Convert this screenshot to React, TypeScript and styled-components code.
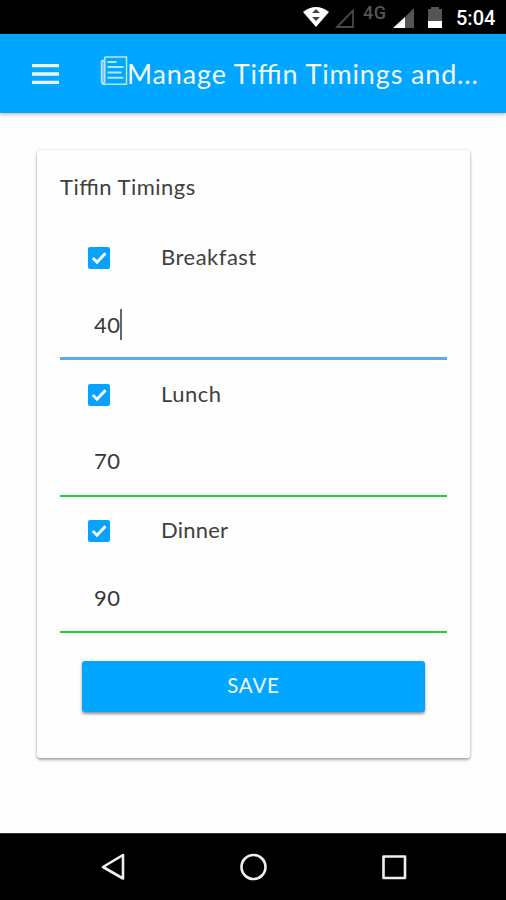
import React from "react";
import styled, { createGlobalStyle } from "styled-components";

const GlobalStyle = createGlobalStyle`
  * { box-sizing: border-box; }
  body { margin: 0; background: #fff; font-family: Lato, "Noto Sans", sans-serif; }
`;

const Screen = styled.div`
  width: 506px;
  height: 900px;
  display: flex;
  flex-direction: column;
  background: #fefefe;
  overflow: hidden;
`;

const StatusBar = styled.div`
  height: 34px;
  flex: none;
  display: flex;
  align-items: flex-start;
  justify-content: flex-end;
  background: #000;
`;

const StatusIcons = styled.svg<{ $width: number }>`
  display: block;
  flex: none;
  width: ${(p) => p.$width}px;
  height: 34px;
`;

const Network = styled.span`
  width: 27px;
  padding-top: 2px;
  font: 500 18px/22px Roboto, sans-serif;
  letter-spacing: 0.6px;
  color: #555;
`;

const Clock = styled.span`
  width: 50px;
  padding-top: 6px;
  font: 500 20px/24px Roboto, sans-serif;
  color: #fff;
`;

const AppBar = styled.header`
  height: 79px;
  flex: none;
  display: flex;
  align-items: center;
  padding-left: 32px;
  background: #00a6ff;
  box-shadow: 0 1px 4px rgba(60, 40, 20, 0.4);
`;

const MenuIcon = styled.svg`
  width: 28px;
  height: 20px;
  margin-right: 40px;
`;

const NewsIcon = styled.svg`
  width: 28px;
  height: 30px;
  margin-top: -5px;
`;

const Heading = styled.h1`
  margin: 0 0 0 -1px;
  font-size: 27px;
  font-weight: 400;
  line-height: 36px;
  letter-spacing: 0.85px;
  font-feature-settings: "liga" 1;
  white-space: nowrap;
  color: #f4fbff;
`;

const Content = styled.main`
  flex: 1;
  padding: 37px 36px 0 37px;
`;

const Card = styled.section`
  height: 608px;
  padding: 22px 23px 0;
  border-radius: 3px;
  background: #fefefe;
  box-shadow: 0 2px 3px rgba(0, 0, 0, 0.32), 0 0 3px rgba(0, 0, 0, 0.14);
`;

const CardTitle = styled.h2`
  margin: 0 0 21.5px;
  height: 30px;
  font-size: 22px;
  font-weight: 400;
  line-height: 30px;
  letter-spacing: 0.5px;
  font-feature-settings: "liga" 1;
  color: #404040;
`;

const CheckRow = styled.label`
  height: 69px;
  display: flex;
  align-items: center;
  padding-left: 28px;
`;

const CheckBox = styled.span`
  width: 22px;
  height: 22px;
  margin-right: 51px;
  display: flex;
  border-radius: 2px;
  background: #08a2fd;
`;

const MealName = styled.span<{ $spacing: number }>`
  padding-bottom: 2px;
  font-size: 22px;
  line-height: 30px;
  letter-spacing: ${(p) => p.$spacing}px;
  color: #404040;
`;

const Field = styled.div<{ $active: boolean }>`
  height: 67.5px;
  display: flex;
  align-items: center;
  padding: 0 0 ${(p) => (p.$active ? 0 : 2)}px 34px;
  border-bottom: ${(p) => (p.$active ? "3px solid #5aaaf0" : "2.5px solid #1fd136")};
  font-size: 22px;
  letter-spacing: 0.4px;
  color: #383838;
`;

const Caret = styled.i`
  width: 2px;
  height: 31px;
  background: #666;
`;

const SaveButton = styled.button`
  display: block;
  width: 343px;
  height: 51px;
  margin: 28px 0 0 22px;
  padding: 0 0 3px;
  border: 0;
  border-radius: 3px;
  background: #00a6ff;
  box-shadow: 0 2px 3px rgba(30, 30, 60, 0.5);
  font-family: inherit;
  font-size: 20.5px;
  letter-spacing: 0.8px;
  color: #f2faff;
`;

const NavBar = styled.nav`
  height: 67px;
  flex: none;
  display: flex;
  background: #000;
  border-top: 1px solid #333;
`;

const NavIcons = styled.svg`
  width: 506px;
  height: 66px;
`;

const meals = [
  { name: "Breakfast", price: "40", active: true, spacing: 0.5 },
  { name: "Lunch", price: "70", active: false, spacing: 0.5 },
  { name: "Dinner", price: "90", active: false, spacing: 0.2 },
];

export default function App() {
  return (
    <Screen>
      <GlobalStyle />
      <StatusBar>
        <StatusIcons $width={63} viewBox="300 0 63 34">
          <path d="M303 12Q316 2 329 12L316 27Z" fill="#fff" />
          <path d="M312 13l4-4 4 4zM312 17l4 4 4-4z" fill="#444" />
          <path d="M337 27L353 10.500V27Z" fill="none" stroke="#484848" strokeWidth="1.800" />
        </StatusIcons>
        <Network>4G</Network>
        <StatusIcons $width={66} viewBox="390 0 66 34">
          <path d="M414 8V28H394Z" fill="#555" />
          <path d="M405 17V28H393Z" fill="#fff" />
          <path d="M431 7h8v2h3v12h-14V9h3z" fill="#555" />
          <path d="M428 21h14v7h-14z" fill="#fff" />
        </StatusIcons>
        <Clock>5:04</Clock>
      </StatusBar>
      <AppBar>
        <MenuIcon viewBox="0 0 28 20">
          <path d="M0 1.500h27M0 10h27M0 18.500h27" stroke="#e8f7ff" strokeWidth="3.300" />
        </MenuIcon>
        <NewsIcon viewBox="100 56 28 30" fill="none" stroke="#b5e4ff" strokeWidth="1.500">
          <path d="M104.500 60.500H102.500Q101.500 60.500 101.500 62V81Q101.500 84.500 105 84.500" fill="#6fc8ff" />
          <path d="M104.800 57H126.500V84.300H105Q103 84.300 103 82" />
          <path d="M104.800 57V81Q104.800 83.500 103 83" />
          <path d="M107.500 62h9M107.500 67h16M107.500 72.500h14M107.500 77.700h16" strokeWidth="2" />
        </NewsIcon>
        <Heading>Manage Tiffin Timings and...</Heading>
      </AppBar>
      <Content>
        <Card>
          <CardTitle>Tiffin Timings</CardTitle>
          {meals.map((meal) => (
            <React.Fragment key={meal.name}>
              <CheckRow>
                <CheckBox>
                  <svg width="22" height="22" viewBox="0 0 22 22">
                    <path d="M4.800 11l4.200 4.200 8.500-9" fill="none" stroke="#fff" strokeWidth="2.900" />
                  </svg>
                </CheckBox>
                <MealName $spacing={meal.spacing}>{meal.name}</MealName>
              </CheckRow>
              <Field $active={meal.active}>
                {meal.price}
                {meal.active && <Caret />}
              </Field>
            </React.Fragment>
          ))}
          <SaveButton>SAVE</SaveButton>
        </Card>
      </Content>
      <NavBar>
        <NavIcons viewBox="0 834 506 66" fill="none" stroke="#f0f0f0" strokeWidth="2.600" strokeLinejoin="round">
          <path d="M103 867L123 855V878.500Z" />
          <circle cx="253.500" cy="867" r="12" />
          <rect x="383.500" y="856.500" width="21.500" height="21.500" />
        </NavIcons>
      </NavBar>
    </Screen>
  );
}
